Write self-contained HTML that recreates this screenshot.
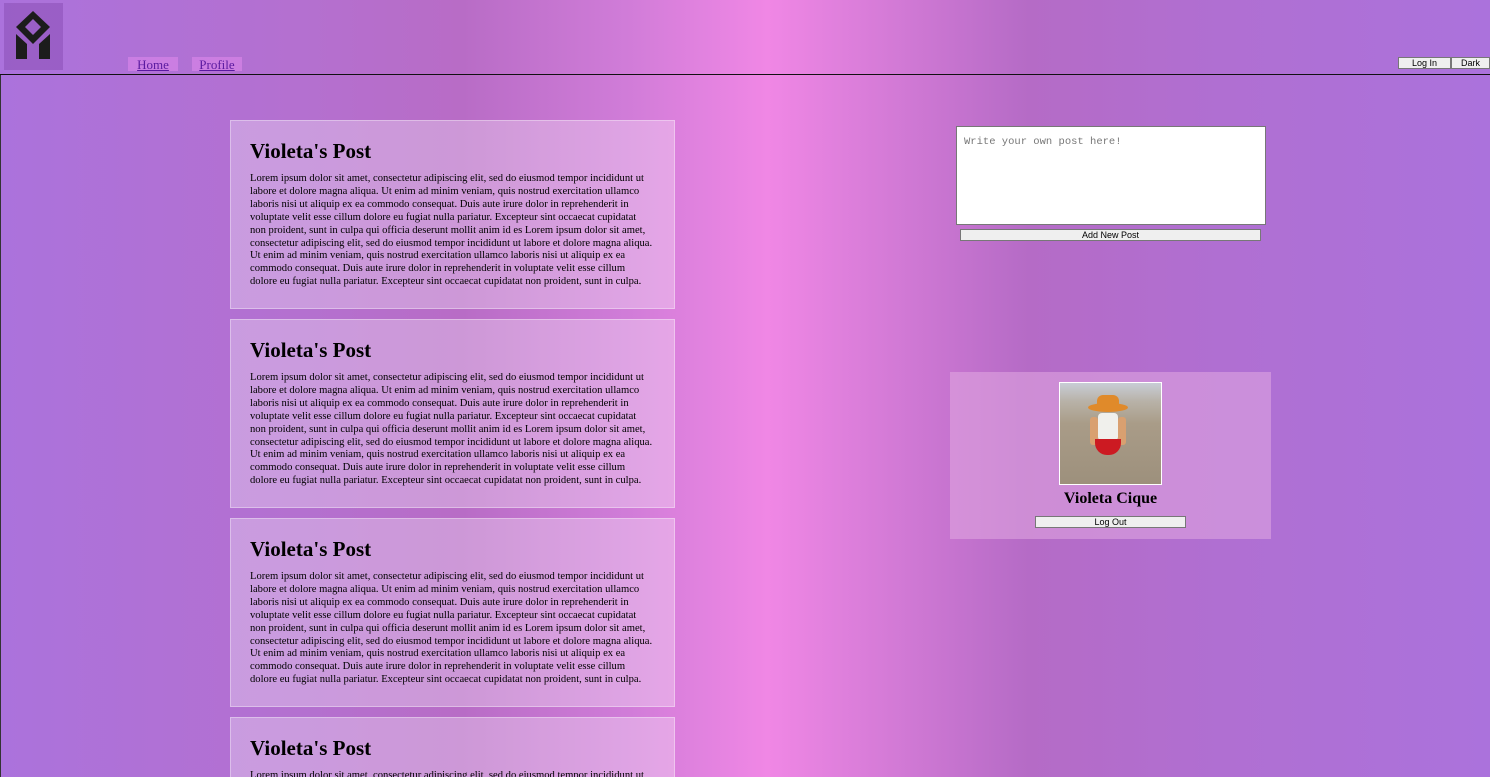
<!DOCTYPE html>
<html><head><meta charset="utf-8"><style>
*{margin:0;padding:0;box-sizing:border-box}
html,body{width:1490px;height:777px;overflow:hidden}
body{font-family:"Liberation Serif",serif;position:relative;
background:linear-gradient(90deg,#ab72dc 0%,#b470d0 20%,#b86cc6 31%,#d07cd8 42%,#f087e5 51.5%,#d37ad6 60%,#b56bc6 69%,#b06fd2 82%,#ab72dc 100%);}
.hdr{position:absolute;left:0;top:0;width:1490px;height:75px;border-bottom:1.5px solid #111}
.logo{position:absolute;left:4px;top:3px;width:59px;height:67px;background:rgba(120,60,160,0.35)}
.nav{position:absolute;top:57px;height:14px;background:rgba(230,140,240,0.5);font-size:13px;line-height:15px;text-align:center}
.nav a{color:#5a1aa0;text-decoration:underline}
.btn{position:absolute;font-family:"Liberation Sans",sans-serif;font-size:9px;background:#efefef;border:1px solid #777;text-align:center;line-height:10px;color:#000}
.post{position:absolute;left:230px;width:445px;height:189px;background:rgba(255,255,255,0.3);border:1px solid rgba(255,255,255,0.35);padding:0 0 0 19px;overflow:hidden}
.post h2{font-size:21px;font-weight:bold;margin-top:17px;line-height:26px}
.post p{font-size:10.6px;line-height:12.9px;margin-top:9px;white-space:nowrap;color:#000}
.ta{position:absolute;left:956px;top:126px;width:310px;height:99px;background:#fff;border:1px solid #777;font-family:"Liberation Mono",monospace;font-size:10.5px;color:#777;padding:9px 7px}
.card{position:absolute;left:950px;top:372px;width:321px;height:167px;background:rgba(225,170,225,0.55)}
</style></head><body>
<div class="hdr">
<div class="logo"><svg width="59" height="67" viewBox="0 0 59 67"><path d="M29 8 L46 24 L29 41 L12 24 Z M29 16 L21 24 L29 32 L37 24 Z" fill="#1c1c1c" fill-rule="evenodd"/><path d="M12 31 L23 41 L23 56 L12 56 Z M46 31 L35 41 L35 56 L46 56 Z" fill="#1c1c1c"/></svg></div>
<div class="nav" style="left:128px;width:50px"><a>Home</a></div>
<div class="nav" style="left:192px;width:50px"><a>Profile</a></div>
<div class="btn" style="left:1398px;top:57px;width:53px;height:12px">Log In</div>
<div class="btn" style="left:1451px;top:57px;width:39px;height:12px">Dark</div>
</div>
<div style="position:absolute;left:0;top:75px;width:1px;height:702px;background:#333"></div>

<div class="post" style="top:120px"><h2>Violeta's Post</h2><p>Lorem ipsum dolor sit amet, consectetur adipiscing elit, sed do eiusmod tempor incididunt ut<br>labore et dolore magna aliqua. Ut enim ad minim veniam, quis nostrud exercitation ullamco<br>laboris nisi ut aliquip ex ea commodo consequat. Duis aute irure dolor in reprehenderit in<br>voluptate velit esse cillum dolore eu fugiat nulla pariatur. Excepteur sint occaecat cupidatat<br>non proident, sunt in culpa qui officia deserunt mollit anim id es Lorem ipsum dolor sit amet,<br>consectetur adipiscing elit, sed do eiusmod tempor incididunt ut labore et dolore magna aliqua.<br>Ut enim ad minim veniam, quis nostrud exercitation ullamco laboris nisi ut aliquip ex ea<br>commodo consequat. Duis aute irure dolor in reprehenderit in voluptate velit esse cillum<br>dolore eu fugiat nulla pariatur. Excepteur sint occaecat cupidatat non proident, sunt in culpa.</p></div>
<div class="post" style="top:319px"><h2>Violeta's Post</h2><p>Lorem ipsum dolor sit amet, consectetur adipiscing elit, sed do eiusmod tempor incididunt ut<br>labore et dolore magna aliqua. Ut enim ad minim veniam, quis nostrud exercitation ullamco<br>laboris nisi ut aliquip ex ea commodo consequat. Duis aute irure dolor in reprehenderit in<br>voluptate velit esse cillum dolore eu fugiat nulla pariatur. Excepteur sint occaecat cupidatat<br>non proident, sunt in culpa qui officia deserunt mollit anim id es Lorem ipsum dolor sit amet,<br>consectetur adipiscing elit, sed do eiusmod tempor incididunt ut labore et dolore magna aliqua.<br>Ut enim ad minim veniam, quis nostrud exercitation ullamco laboris nisi ut aliquip ex ea<br>commodo consequat. Duis aute irure dolor in reprehenderit in voluptate velit esse cillum<br>dolore eu fugiat nulla pariatur. Excepteur sint occaecat cupidatat non proident, sunt in culpa.</p></div>
<div class="post" style="top:518px"><h2>Violeta's Post</h2><p>Lorem ipsum dolor sit amet, consectetur adipiscing elit, sed do eiusmod tempor incididunt ut<br>labore et dolore magna aliqua. Ut enim ad minim veniam, quis nostrud exercitation ullamco<br>laboris nisi ut aliquip ex ea commodo consequat. Duis aute irure dolor in reprehenderit in<br>voluptate velit esse cillum dolore eu fugiat nulla pariatur. Excepteur sint occaecat cupidatat<br>non proident, sunt in culpa qui officia deserunt mollit anim id es Lorem ipsum dolor sit amet,<br>consectetur adipiscing elit, sed do eiusmod tempor incididunt ut labore et dolore magna aliqua.<br>Ut enim ad minim veniam, quis nostrud exercitation ullamco laboris nisi ut aliquip ex ea<br>commodo consequat. Duis aute irure dolor in reprehenderit in voluptate velit esse cillum<br>dolore eu fugiat nulla pariatur. Excepteur sint occaecat cupidatat non proident, sunt in culpa.</p></div>
<div class="post" style="top:717px;height:60px;border-bottom:none"><h2>Violeta's Post</h2><p>Lorem ipsum dolor sit amet, consectetur adipiscing elit, sed do eiusmod tempor incididunt ut</p></div>

<div class="ta">Write your own post here!</div>
<div class="btn" style="left:960px;top:229px;width:301px;height:12px">Add New Post</div>

<div class="card">
<div style="position:absolute;left:109px;top:10px;width:103px;height:103px;border:1px solid #fff;background:linear-gradient(180deg,#c8cdd6 0%,#b8b2a8 18%,#a99c88 40%,#9d907c 100%);overflow:hidden">
<div style="position:absolute;left:28px;top:20px;width:40px;height:9px;border-radius:50%;background:#e08a2a"></div>
<div style="position:absolute;left:37px;top:12px;width:22px;height:12px;border-radius:6px 6px 0 0;background:#e08a2a"></div>
<div style="position:absolute;left:38px;top:30px;width:20px;height:28px;background:#f0f0ec;border-radius:4px"></div>
<div style="position:absolute;left:30px;top:34px;width:8px;height:28px;background:#d9a070;border-radius:3px"></div>
<div style="position:absolute;left:58px;top:34px;width:8px;height:28px;background:#d9a070;border-radius:3px"></div>
<div style="position:absolute;left:35px;top:56px;width:26px;height:16px;background:#cc1a22;border-radius:0 0 12px 12px"></div>
</div>
<div style="position:absolute;left:0;top:118px;width:321px;text-align:center;font-weight:bold;font-size:16px">Violeta Cique</div>
<div class="btn" style="left:85px;top:144px;width:151px;height:12px">Log Out</div>
</div>
</body></html>
